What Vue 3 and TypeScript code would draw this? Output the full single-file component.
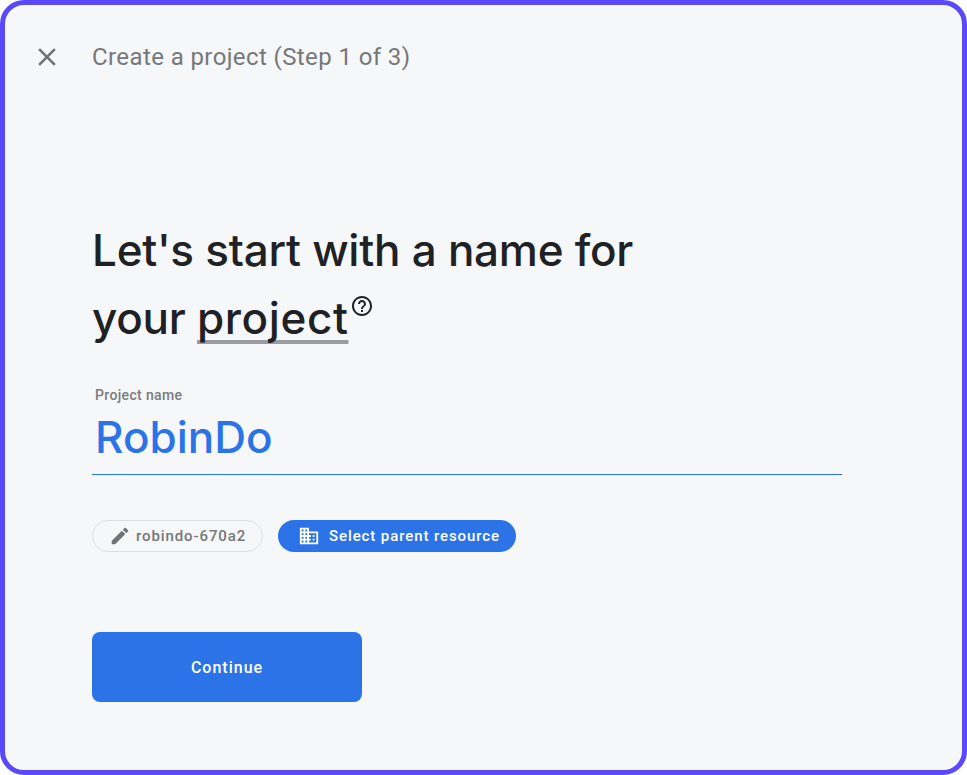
<script setup lang="ts">
const title = "Create a project (Step 1 of 3)";
</script>

<template>
  <div class="frame">
    <header class="top">
      <svg class="close" width="30" height="30" viewBox="0 0 24 24" aria-hidden="true">
        <path d="M19 6.41 17.59 5 12 10.59 6.41 5 5 6.41 10.59 12 5 17.59 6.41 19 12 13.41 17.59 19 19 17.59 13.41 12z" />
      </svg>
      <span class="title">{{ title }}</span>
    </header>
    <main class="body">
      <h1 class="heading">
        Let's start with a name for<br />your <span class="term">project</span><svg class="help" width="24" height="24" viewBox="0 0 24 24" aria-hidden="true"><path d="M11 18h2v-2h-2v2zm1-16C6.48 2 2 6.48 2 12s4.48 10 10 10 10-4.48 10-10S17.52 2 12 2zm0 18c-4.41 0-8-3.59-8-8s3.59-8 8-8 8 3.59 8 8-3.59 8-8 8zm0-14c-2.21 0-4 1.79-4 4h2c0-1.1.9-2 2-2s2 .9 2 2c0 2-3 1.75-3 5h2c0-2.25 3-2.5 3-5 0-2.21-1.79-4-4-4z" /></svg>
      </h1>
      <div class="field">
        <div class="label">Project name</div>
        <div class="value">RobinDo</div>
      </div>
      <div class="chips">
        <div class="chip chip-id">
          <svg width="22" height="22" viewBox="0 0 24 24" aria-hidden="true"><path d="M3 17.25V21h3.75L17.81 9.94l-3.75-3.75L3 17.25zM20.71 7.04a1 1 0 0 0 0-1.41l-2.34-2.34a1 1 0 0 0-1.41 0l-1.83 1.83 3.75 3.75 1.83-1.83z" /></svg>
          <span>robindo-670a2</span>
        </div>
        <div class="chip chip-parent">
          <svg width="22" height="22" viewBox="0 0 24 24" aria-hidden="true"><path d="M12 7V3H2v18h20V7H12zM6 19H4v-2h2v2zm0-4H4v-2h2v2zm0-4H4V9h2v2zm0-4H4V5h2v2zm4 12H8v-2h2v2zm0-4H8v-2h2v2zm0-4H8V9h2v2zm0-4H8V5h2v2zm10 12h-8v-2h2v-2h-2v-2h2v-2h-2V9h8v10zm-2-8h-2v2h2v-2zm0 4h-2v2h2v-2z" /></svg>
          <span>Select parent resource</span>
        </div>
      </div>
      <button class="continue" type="button">Continue</button>
    </main>
  </div>
</template>

<style>
html, body { margin: 0; background: #ffffff; }
</style>

<style scoped>
.frame {
  box-sizing: border-box;
  width: 967px;
  height: 775px;
  border: 5px solid #5a48fb;
  border-radius: 24px;
  background: #f6f7f9;
  font-family: Roboto, "Liberation Sans", sans-serif;
  overflow: hidden;
}
.top {
  display: flex;
  align-items: center;
  height: 104px;
  padding-left: 27px;
  box-sizing: border-box;
}
.close { fill: #6f7276; margin-right: 30px; }
.title { font-size: 24px; color: #75777a; letter-spacing: 0.4px; }
.body { padding: 107px 0 0 87px; display: flex; flex-direction: column; align-items: flex-start; }
.heading {
  margin: 0;
  font-family: Inter, sans-serif;
  font-weight: 500;
  font-size: 44px;
  letter-spacing: -0.25px;
  line-height: 68px;
  color: #202124;
}
.term {
  letter-spacing: 0.6px;
  text-decoration: underline;
  text-decoration-color: #9a9ca1;
  text-decoration-thickness: 4px;
  text-underline-offset: 6px;
  text-decoration-skip-ink: none;
}
.help { fill: #202124; vertical-align: 16px; margin-left: 2px; }
.field { width: 750px; border-bottom: 1px solid #2b73e7; margin-top: 30px; padding-bottom: 9px; }
.label { font-size: 14px; font-weight: 500; line-height: 27px; color: #7a7c80; padding-left: 3px; letter-spacing: 0.35px; }
.value { font-family: Inter, sans-serif; font-weight: 450; font-size: 44px; line-height: 56px; color: #2b73e7; padding-left: 3px; }
.chips { display: flex; gap: 15px; margin-top: 45px; }
.chip {
  box-sizing: border-box;
  height: 32px;
  border-radius: 16px;
  display: flex;
  align-items: center;
  font-size: 15px;
  font-weight: 500;
  letter-spacing: 0.9px;
}
.chip-id { width: 171px; border: 1px solid #dcdee0; color: #75777a; padding-left: 16px; gap: 5px; }
.chip-id svg { fill: #6f7276; }
.chip-parent { width: 238px; background: #2b73e7; color: #ffffff; padding-left: 20px; gap: 9px; }
.chip-parent svg { fill: #ffffff; }
.continue {
  margin-top: 80px;
  width: 270px;
  height: 70px;
  border: 0;
  border-radius: 8px;
  background: #2b73e7;
  color: #ffffff;
  font-family: Roboto, sans-serif;
  font-size: 16px;
  font-weight: 500;
  letter-spacing: 1px;
}
</style>
